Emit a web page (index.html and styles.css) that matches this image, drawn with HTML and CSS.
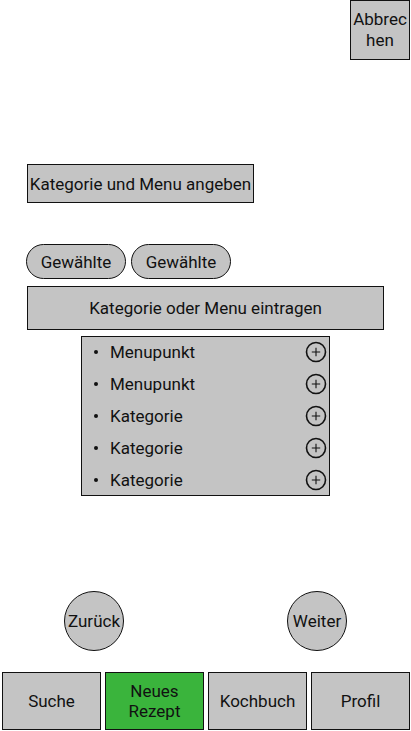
FILE: index.html
```html
<!DOCTYPE html>
<html lang="de">
<head>
<meta charset="utf-8">
<link rel="stylesheet" href="styles.css">
</head>
<body>
<div class="screen">
  <div class="top">
    <button class="cancel">Abbrechen</button>
  </div>
  <div class="title">Kategorie und Menu angeben</div>
  <div class="chips">
    <span class="chip">Gewählte</span>
    <span class="chip">Gewählte</span>
  </div>
  <div class="input">Kategorie oder Menu eintragen</div>
  <ul class="list">
    <li><span class="dot"></span><span class="label">Menupunkt</span><svg class="plus" viewBox="0 0 22 22"><circle cx="11" cy="11" r="9.5" fill="none" stroke="#111" stroke-width="1.6"/><path d="M11 6.8v8.4M6.8 11h8.4" stroke="#111" stroke-width="1.1"/></svg></li>
    <li><span class="dot"></span><span class="label">Menupunkt</span><svg class="plus" viewBox="0 0 22 22"><circle cx="11" cy="11" r="9.5" fill="none" stroke="#111" stroke-width="1.6"/><path d="M11 6.8v8.4M6.8 11h8.4" stroke="#111" stroke-width="1.1"/></svg></li>
    <li><span class="dot"></span><span class="label">Kategorie</span><svg class="plus" viewBox="0 0 22 22"><circle cx="11" cy="11" r="9.5" fill="none" stroke="#111" stroke-width="1.6"/><path d="M11 6.8v8.4M6.8 11h8.4" stroke="#111" stroke-width="1.1"/></svg></li>
    <li><span class="dot"></span><span class="label">Kategorie</span><svg class="plus" viewBox="0 0 22 22"><circle cx="11" cy="11" r="9.5" fill="none" stroke="#111" stroke-width="1.6"/><path d="M11 6.8v8.4M6.8 11h8.4" stroke="#111" stroke-width="1.1"/></svg></li>
    <li><span class="dot"></span><span class="label">Kategorie</span><svg class="plus" viewBox="0 0 22 22"><circle cx="11" cy="11" r="9.5" fill="none" stroke="#111" stroke-width="1.6"/><path d="M11 6.8v8.4M6.8 11h8.4" stroke="#111" stroke-width="1.1"/></svg></li>
  </ul>
  <div class="spacer"></div>
  <div class="steps">
    <button class="round back">Zurück</button>
    <button class="round next">Weiter</button>
  </div>
  <nav class="nav">
    <div class="tab">Suche</div>
    <div class="tab active">Neues<br>Rezept</div>
    <div class="tab">Kochbuch</div>
    <div class="tab">Profil</div>
  </nav>
</div>
</body>
</html>
```
FILE: styles.css
```css
* { box-sizing: border-box; }
html, body { margin: 0; padding: 0; background: #fff; }
body {
  font-family: Roboto, "Liberation Sans", sans-serif;
  font-size: 17px;
  color: #111;
}
.screen {
  width: 411px;
  height: 731px;
  display: flex;
  flex-direction: column;
  overflow: hidden;
}
.top {
  display: flex;
  justify-content: flex-end;
  padding-right: 1px;
}
.cancel {
  width: 60px;
  height: 60px;
  background: #c4c4c4;
  border: 1px solid #111;
  font: inherit;
  color: inherit;
  line-height: 21px;
  padding: 0 1px;
  word-break: break-all;
  display: flex;
  align-items: center;
  justify-content: center;
  text-align: center;
}
.title {
  margin: 104px 0 0 27px;
  width: 227px;
  height: 39px;
  background: #c4c4c4;
  border: 1px solid #111;
  display: flex;
  align-items: center;
  justify-content: center;
  white-space: nowrap;
}
.chips {
  display: flex;
  gap: 5px;
  margin: 41px 0 0 26px;
}
.chip {
  width: 100px;
  height: 35px;
  border: 1px solid #111;
  border-radius: 18px;
  background: #c4c4c4;
  display: flex;
  align-items: center;
  justify-content: center;
}
.input {
  margin: 7px 0 0 27px;
  width: 357px;
  height: 44px;
  background: #c4c4c4;
  border: 1px solid #111;
  display: flex;
  align-items: center;
  justify-content: center;
}
.list {
  list-style: none;
  margin: 6px 0 0 81px;
  padding: 0;
  width: 249px;
  height: 160px;
  background: #c4c4c4;
  border: 1px solid #111;
}
.list li {
  height: 32px;
  display: flex;
  align-items: center;
  padding-left: 12px;
  padding-right: 2px;
  margin-top: -1px;
  margin-bottom: 1px;
}
.dot {
  width: 4px;
  height: 4px;
  border-radius: 50%;
  background: #111;
  margin-right: 12px;
}
.label { flex: 1; }
.plus { width: 22px; height: 22px; }
.spacer { flex: 1; }
.steps {
  display: flex;
  justify-content: space-between;
  padding: 0 64px 0 64px;
}
.round {
  width: 60px;
  height: 60px;
  border-radius: 50%;
  border: 1px solid #111;
  background: #c4c4c4;
  font: inherit;
  color: inherit;
  padding: 0;
  white-space: nowrap;
  display: flex;
  align-items: center;
  justify-content: center;
}
.nav {
  display: flex;
  gap: 4px;
  padding: 21px 1px 1px 2px;
}
.tab {
  flex: 1;
  height: 58px;
  background: #c4c4c4;
  border: 1px solid #111;
  display: flex;
  align-items: center;
  justify-content: center;
  text-align: center;
  line-height: 20px;
}
.tab.active { background: #3ab43c; }
```
